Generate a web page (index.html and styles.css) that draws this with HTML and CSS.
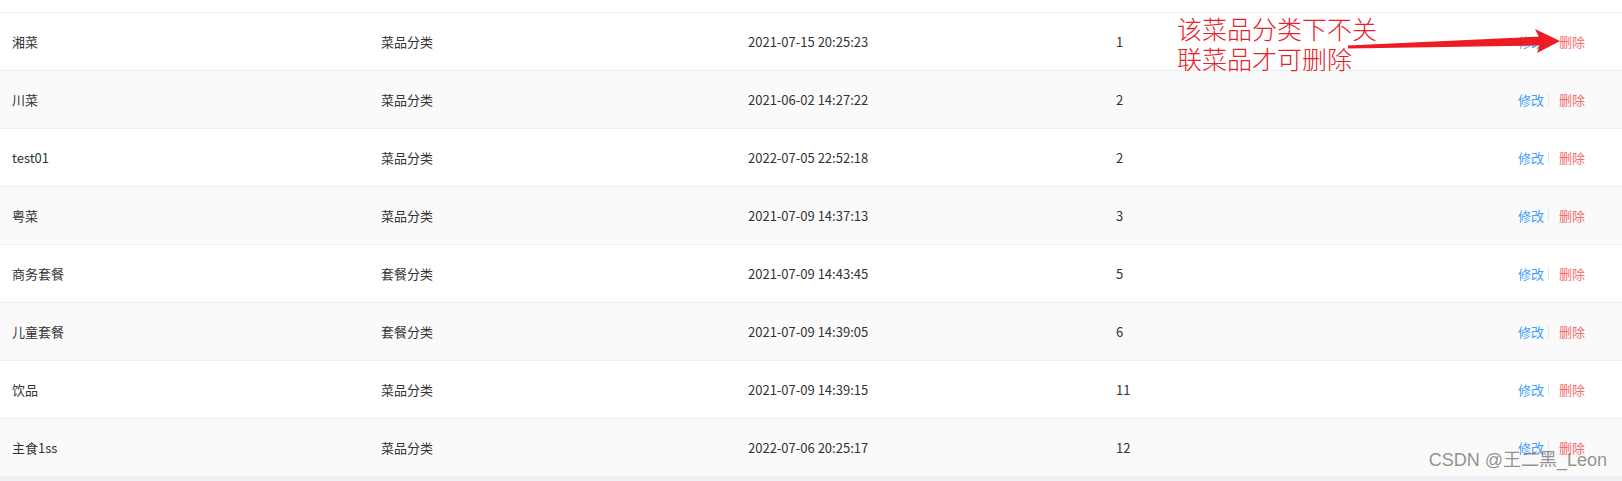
FILE: index.html
```html
<!DOCTYPE html>
<html lang="zh-CN">
<head>
<meta charset="utf-8">
<title>分类管理</title>
<link rel="stylesheet" href="styles.css">
</head>
<body>
<div class="page">
  <div class="table">
    <div class="row">
      <div class="cell">湘菜</div><div class="cell">菜品分类</div><div class="cell">2021-07-15 20:25:23</div><div class="cell">1</div>
      <div class="cell actions"><a class="edit">修改</a><span class="sep"></span><a class="del">删除</a></div>
    </div>
    <div class="row">
      <div class="cell">川菜</div><div class="cell">菜品分类</div><div class="cell">2021-06-02 14:27:22</div><div class="cell">2</div>
      <div class="cell actions"><a class="edit">修改</a><span class="sep"></span><a class="del">删除</a></div>
    </div>
    <div class="row">
      <div class="cell">test01</div><div class="cell">菜品分类</div><div class="cell">2022-07-05 22:52:18</div><div class="cell">2</div>
      <div class="cell actions"><a class="edit">修改</a><span class="sep"></span><a class="del">删除</a></div>
    </div>
    <div class="row">
      <div class="cell">粤菜</div><div class="cell">菜品分类</div><div class="cell">2021-07-09 14:37:13</div><div class="cell">3</div>
      <div class="cell actions"><a class="edit">修改</a><span class="sep"></span><a class="del">删除</a></div>
    </div>
    <div class="row">
      <div class="cell">商务套餐</div><div class="cell">套餐分类</div><div class="cell">2021-07-09 14:43:45</div><div class="cell">5</div>
      <div class="cell actions"><a class="edit">修改</a><span class="sep"></span><a class="del">删除</a></div>
    </div>
    <div class="row">
      <div class="cell">儿童套餐</div><div class="cell">套餐分类</div><div class="cell">2021-07-09 14:39:05</div><div class="cell">6</div>
      <div class="cell actions"><a class="edit">修改</a><span class="sep"></span><a class="del">删除</a></div>
    </div>
    <div class="row">
      <div class="cell">饮品</div><div class="cell">菜品分类</div><div class="cell">2021-07-09 14:39:15</div><div class="cell">11</div>
      <div class="cell actions"><a class="edit">修改</a><span class="sep"></span><a class="del">删除</a></div>
    </div>
    <div class="row">
      <div class="cell">主食1ss</div><div class="cell">菜品分类</div><div class="cell">2022-07-06 20:25:17</div><div class="cell">12</div>
      <div class="cell actions"><a class="edit">修改</a><span class="sep"></span><a class="del">删除</a></div>
    </div>
  </div>

  <div class="note">该菜品分类下不关<br>联菜品才可删除</div>
  <svg class="arrow" width="1622" height="481" viewBox="0 0 1622 481">
    <polygon points="1348,45.5 1541,36.5 1541,45.5 1348,48.5" fill="#ed1c24"/>
    <polygon points="1535,29 1560,41 1537,53 1541,41" fill="#ed1c24"/>
  </svg>
  <div class="watermark">CSDN @王二黑_Leon</div>
</div>
</body>
</html>
```
FILE: styles.css
```css
* { box-sizing: border-box; }
html, body {
  margin: 0;
  padding: 0;
  background: #eef1f6;
}
.page {
  position: relative;
  width: 1622px;
  height: 481px;
  overflow: hidden;
  font-family: "Noto Sans CJK SC", "Noto Sans", sans-serif;
  font-size: 13px;
  color: #333;
}
.table {
  background: #fff;
  padding-top: 12px;
}
.row {
  display: grid;
  grid-template-columns: 369px 367px 368px 1fr;
  grid-template-rows: 57px;
  border-top: 1px solid #ebeef5;
  background: #fff;
}
.row:nth-child(even) {
  background: #fafafa;
}
.row:last-child {
  border-bottom: 1px solid #ebeef5;
}
.cell {
  display: flex;
  align-items: center;
  padding-left: 12px;
  white-space: nowrap;
}
.actions {
  grid-column: 4;
  grid-row: 1;
  justify-content: flex-end;
  padding-right: 37px;
}
.row .cell:nth-child(4) {
  grid-column: 4;
  grid-row: 1;
}
.edit { color: #409eff; }
.del { color: #f56c6c; }
.sep {
  width: 1px;
  height: 13px;
  background: #e4e7ed;
  margin: 0 10px 0 4px;
}
.note {
  position: absolute;
  left: 1177px;
  top: 13px;
  font-size: 25px;
  line-height: 30px;
  color: #e8202a;
  font-weight: 300;
}
.arrow {
  position: absolute;
  left: 0;
  top: 0;
}
.watermark {
  position: absolute;
  right: 15px;
  top: 449px;
  font-family: "Liberation Sans", "Noto Sans CJK SC", sans-serif;
  font-size: 18px;
  line-height: 22px;
  color: rgba(110, 110, 110, 0.75);
}
```
